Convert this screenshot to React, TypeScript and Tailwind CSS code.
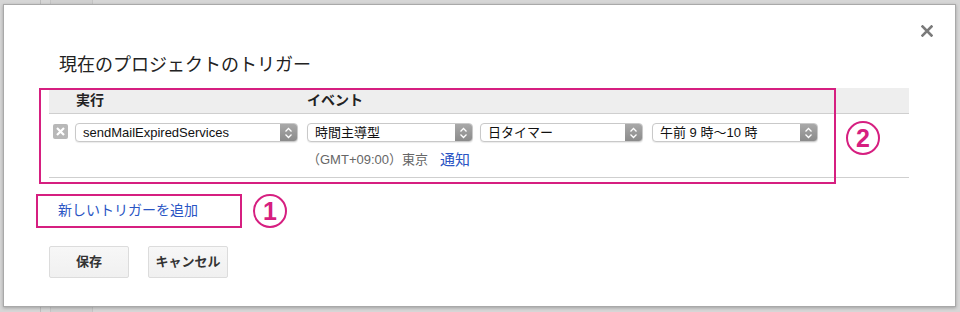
const font = "font-['Liberation_Sans','Noto_Sans_CJK_JP',sans-serif]"

const Chevrons = () => (
	<svg width="9" height="12" viewBox="0 0 9 12" fill="none" stroke="white" strokeWidth="1.3">
		<path d="M1.5 4.5 L4.5 1.5 L7.5 4.5" />
		<path d="M1.5 7.5 L4.5 10.5 L7.5 7.5" />
	</svg>
)

const Select = ({ label, width }: { label: string; width: string }) => (
	<div
		className={`flex h-[19px] items-stretch rounded-[4px] border border-[#c9c9c9] bg-white shadow-[0_1px_1px_rgba(0,0,0,0.08)] ${width}`}
	>
		<span className="flex-1 truncate pl-[7px] text-[13px] leading-[17px] text-[#111]">{label}</span>
		<span className="flex w-[17px] items-center justify-center rounded-r-[3px] bg-gradient-to-b from-[#a9a9a9] to-[#8b8b8b]">
			<Chevrons />
		</span>
	</div>
)

const Circled = ({ n }: { n: string }) => (
	<div className="flex size-[34px] items-center justify-center rounded-full border-2 border-[#d61f80] text-[25px] font-bold leading-none text-[#d61f80]">
		{n}
	</div>
)

const App = () => {
	return (
		<div className={`relative h-[312px] w-[960px] overflow-hidden bg-[#d6d6d6] pl-[3px] pt-[4px] ${font}`}>
			{/* 後ろのページの名残 */}
			<div className="absolute left-[40px] top-0 h-[4px] w-px bg-[#bdbdbd]" />
			<div className="absolute left-[50px] top-0 h-[4px] w-[43px] border-x border-[#c4c4c4] bg-[#d0d0d0]" />
			<div className="absolute bottom-0 left-[40px] h-[6px] w-px bg-[#bdbdbd]" />
			<div className="absolute bottom-0 left-[50px] h-[6px] w-[43px] border-x border-[#c4c4c4] bg-[#d0d0d0]" />

			<div className="relative h-[303px] w-[953px] border border-[#a9a9a9] bg-white shadow-[0_1px_3px_rgba(0,0,0,0.25)]">
				<div className="flex justify-end pr-[22px] pt-[20px]">
					<svg width="12" height="12" viewBox="0 0 12 12" stroke="#7a7a7a" strokeWidth="2.6" strokeLinecap="square">
						<path d="M1.5 1.5 L10.5 10.5 M10.5 1.5 L1.5 10.5" />
					</svg>
				</div>

				<h2 className="ml-[55px] mt-[16px] text-[18px] leading-[24px] text-[#222]">現在のプロジェクトのトリガー</h2>

				<div className="ml-[45px] mt-[11px] w-[860px]">
					<div className="flex h-[26px] items-center border-b border-[#cfcfcf] bg-[#eeeeee] text-[14px] font-bold text-[#222]">
						<span className="ml-[27px] w-[231px]">実行</span>
						<span>イベント</span>
					</div>
					<div className="flex h-[64px] items-start border-b border-[#cfcfcf] pt-[9px]">
						<div className="ml-[4px] mt-[1px] flex size-[15px] items-center justify-center rounded-[2px] bg-[#b8b8b8]">
							<svg width="9" height="9" viewBox="0 0 9 9" stroke="white" strokeWidth="2.2">
								<path d="M1 1 L8 8 M8 1 L1 8" />
							</svg>
						</div>
						<div className="ml-[7px]">
							<Select label="sendMailExpiredServices" width="w-[223px]" />
						</div>
						<div className="ml-[9px] flex flex-col">
							<div className="flex">
								<Select label="時間主導型" width="w-[166px]" />
								<div className="ml-[7px]">
									<Select label="日タイマー" width="w-[163px]" />
								</div>
								<div className="ml-[9px]">
									<Select label="午前 9 時〜10 時" width="w-[166px]" />
								</div>
							</div>
							<div className="mt-[8px] flex h-[20px] items-center">
								<span className="text-[13px] text-[#666]">（GMT+09:00）東京</span>
								<span className="ml-[12px] text-[15px] text-[#2a55c4]">通知</span>
							</div>
						</div>
					</div>
				</div>

				<div className="ml-[54px] mt-[22px] text-[14px] leading-[20px] text-[#2a55c4]">新しいトリガーを追加</div>

				<div className="ml-[45px] mt-[26px] flex gap-[19px]">
					<button className="h-[32px] w-[80px] rounded-[2px] border border-[#dcdcdc] bg-gradient-to-b from-[#f7f7f7] to-[#f0f0f0] text-[13px] font-bold text-[#333]">
						保存
					</button>
					<button className="h-[32px] w-[80px] rounded-[2px] border border-[#dcdcdc] bg-gradient-to-b from-[#f7f7f7] to-[#f0f0f0] text-[13px] font-bold text-[#333]">
						キャンセル
					</button>
				</div>

				{/* 注釈 */}
				<div className="absolute left-[35px] top-[83px] h-[96px] w-[797px] border-2 border-[#d61f80]" />
				<div className="absolute left-[842px] top-[116px]">
					<Circled n="2" />
				</div>
				<div className="absolute left-[32px] top-[189px] h-[34px] w-[206px] border-2 border-[#d61f80]" />
				<div className="absolute left-[249px] top-[189px]">
					<Circled n="1" />
				</div>
			</div>
		</div>
	)
}

export default App
